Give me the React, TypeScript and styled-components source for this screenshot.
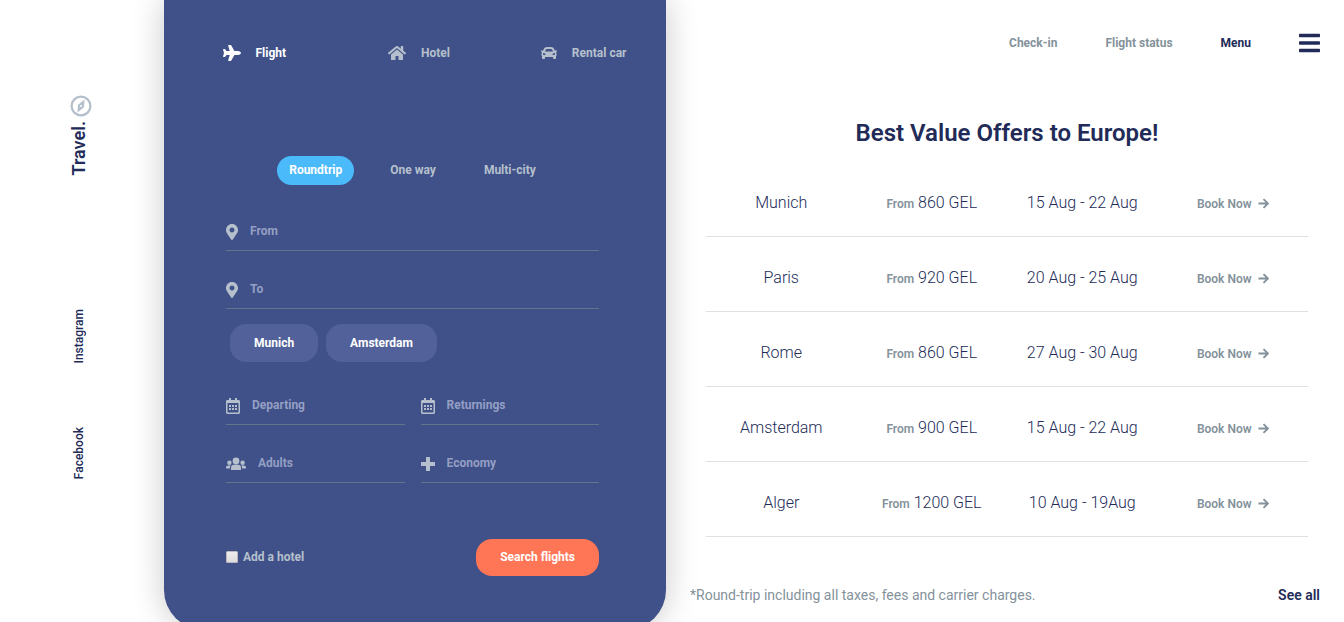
import React from 'react';
import styled, { createGlobalStyle } from 'styled-components';
import {
  FaPlane, FaHome, FaCar, FaMapMarkerAlt, FaRegCalendarAlt, FaBars,
} from 'react-icons/fa';

const GlobalStyle = createGlobalStyle`
  *, *::before, *::after { box-sizing: border-box; }
  body {
    margin: 0;
    overflow: hidden;
    background: #fff;
    color: #222b58;
    font: 700 12px/18px Roboto, "Liberation Sans", sans-serif;
  }
  button, input { font: inherit; }
  a { color: inherit; text-decoration: none; }
`;

const Page = styled.div`
  display: grid;
  grid-template-columns: 164px minmax(440px, 502fr) minmax(600px, 678fr);
  min-height: 100vh;
`;

const Sidebar = styled.aside`
  display: flex;
  flex-direction: column;
  align-items: flex-start;
  padding: 95px 0 0 67px;
`;

const Brand = styled.a`
  display: flex;
  flex-direction: column;
  align-items: flex-start;
  gap: 4px;
  height: 214px;
  svg { margin-left: 3px; color: #b4bfcc; }
`;

const Vertical = styled.span<{ $large?: boolean }>`
  writing-mode: vertical-rl;
  transform: rotate(180deg);
  font-size: ${p => (p.$large ? 18 : 12)}px;
  font-weight: ${p => (p.$large ? 600 : 500)};
  line-height: 24px;
`;

const Social = styled.nav`
  display: flex;
  flex-direction: column;
  align-items: flex-start;
  gap: 64px;
  a { display: flex; }
`;

const Panel = styled.main`
  height: 630px;
  padding: 43px 67px 0 62px;
  border-radius: 0 0 40px 40px;
  background: #405189;
  color: #b5c0cc;
  box-shadow: 0 0 32px rgba(0, 0, 0, 0.22);
`;

const Services = styled.nav`
  display: grid;
  grid-template-columns: repeat(3, 1fr);
  justify-items: center;
  margin: 0 -67px 0 -62px;
  padding-left: 8px;
`;

const Service = styled.button<{ $active?: boolean }>`
  display: flex;
  align-items: center;
  gap: 15px;
  padding: 0;
  border: 0;
  background: none;
  color: ${p => (p.$active ? '#fff' : '#b5c0cc')};
  line-height: 20px;
`;

const PlaneIcon = styled(FaPlane)`
  width: 18px;
  height: 16px;
`;

const HomeIcon = styled(FaHome)`
  width: 18px;
  height: 16px;
`;

const CarIcon = styled(FaCar)`
  width: 16px;
  height: 16px;
`;

const PinIcon = styled(FaMapMarkerAlt)`
  width: 12px;
  height: 16px;
`;

const CalendarIcon = styled(FaRegCalendarAlt)`
  width: 14px;
  height: 16px;
`;

const BarsIcon = styled(FaBars)`
  width: 21px;
  height: 24px;
`;

const Trips = styled.div`
  display: flex;
  justify-content: center;
  gap: 24px;
  margin: 93px 0 32px;
`;

const Trip = styled.button<{ $active?: boolean }>`
  padding: 5px 12px 6px;
  border: 0;
  border-radius: 15px;
  background: ${p => (p.$active ? '#4bbafa' : 'transparent')};
  color: ${p => (p.$active ? '#fff' : '#b5c0cc')};
`;

const Field = styled.label`
  display: flex;
  align-items: center;
  gap: 12px;
  height: 34px;
  padding-bottom: 6px;
  border-bottom: 1px solid #64748a;
  svg { flex: none; margin-top: 2px; }
`;

const TextInput = styled.input`
  flex: 1;
  min-width: 0;
  padding: 0;
  border: 0;
  outline: 0;
  background: none;
  color: #fff;
  &::placeholder { color: #949fc4; opacity: 1; }
`;

const Stack = styled.div`
  display: grid;
  gap: 24px;
`;

const Pair = styled.div`
  display: grid;
  grid-template-columns: repeat(2, minmax(0, 1fr));
  gap: 24px 16px;
`;

const Chips = styled.div`
  display: flex;
  gap: 8px;
  margin: 15px 4px 29px;
`;

const Pill = styled.button<{ $accent?: boolean }>`
  padding: ${p => (p.$accent ? '9px 24px 10px' : '10px 24px')};
  border: 0;
  border-radius: 16px;
  background: ${p => (p.$accent ? '#ff7657' : '#52619a')};
  color: #fff;
`;

const Actions = styled.div`
  display: flex;
  align-items: center;
  justify-content: space-between;
  margin-top: 56px;
`;

const Check = styled.label`
  display: flex;
  align-items: center;
  gap: 5px;
  padding-bottom: 2px;
`;

const Tick = styled.input`
  appearance: none;
  width: 12px;
  height: 12px;
  margin: 0;
  border: 1px solid #b9b9b9;
  border-radius: 1px;
  background: linear-gradient(#eee, #dcdcdc);
  &:checked { background: #4bbafa; }
`;

const Offers = styled.section`
  padding: 31px 24px 0;
`;

const TopNav = styled.nav`
  display: flex;
  align-items: center;
  justify-content: flex-end;
  gap: 48px;
  color: #84929b;
`;

const MenuButton = styled.button`
  display: flex;
  align-items: center;
  gap: 48px;
  padding: 0;
  border: 0;
  background: none;
  color: #222b58;
`;

const Title = styled.h1`
  margin: 62px 0 29px;
  padding-left: 4px;
  font-size: 24px;
  font-weight: 600;
  line-height: 32px;
  text-align: center;
`;

const Table = styled.table`
  width: calc(100% - 28px);
  margin-left: 16px;
  border-collapse: collapse;
  table-layout: fixed;
  font-size: 16px;
  font-weight: 300;
  line-height: 24px;
  text-align: center;
  td { height: 75px; padding: 8px 0 0; border-bottom: 1px solid #dce1e6; }
  tr:first-child td { height: 58px; padding: 0 0 8px; }
`;

const Muted = styled.span`
  color: #84929b;
  font-size: 12px;
  font-weight: 600;
  line-height: 12px;
`;

const Book = styled.a`
  color: #84929b;
  font-size: 12px;
  font-weight: 600;
  line-height: 12px;
  svg { margin-left: 3px; vertical-align: -1px; }
`;

const Footer = styled.footer`
  display: flex;
  justify-content: space-between;
  margin-top: 46px;
  font-size: 14px;
  font-weight: 400;
  line-height: 24px;
  color: #84929b;
  a { color: #222b58; font-weight: 600; }
`;

const offers = [
  ['Munich', '860', '15 Aug - 22 Aug'],
  ['Paris', '920', '20 Aug - 25 Aug'],
  ['Rome', '860', '27 Aug - 30 Aug'],
  ['Amsterdam', '900', '15 Aug - 22 Aug'],
  ['Alger', '1200', '10 Aug - 19Aug'],
];

const Compass = () => (
  <svg width="22" height="22" viewBox="0 0 22 22" fill="none" aria-hidden="true">
    <circle cx="11" cy="11" r="9.4" stroke="currentColor" strokeWidth="2.2" />
    <path
      fill="currentColor"
      fillRule="evenodd"
      d="M14.6 4.6 13.9 12.2 7.4 17.4 8.1 9.8ZM11 10a1 1 0 1 0 0 2 1 1 0 0 0 0-2Z"
    />
  </svg>
);

const People = () => (
  <svg width="20" height="16" viewBox="0 0 20 16" fill="currentColor" aria-hidden="true">
    <circle cx="10" cy="5" r="3.4" />
    <circle cx="3.4" cy="6.8" r="2.2" />
    <circle cx="16.6" cy="6.8" r="2.2" />
    <path d="M5 14v-2.2a3 3 0 0 1 3-3h4a3 3 0 0 1 3 3V14Z" />
    <path d="M0 12.6v-1a2.2 2.2 0 0 1 2.2-2.2h2.6a4 4 0 0 0-.9 3.2Z" />
    <path d="M20 12.6v-1a2.2 2.2 0 0 0-2.2-2.2h-2.6a4 4 0 0 1 .9 3.2Z" />
  </svg>
);

const Plus = () => (
  <svg width="14" height="16" viewBox="0 0 14 16" fill="currentColor" aria-hidden="true">
    <path d="M5.600 1h2.800a.6.6 0 0 1 .6.6V6h4.400a.6.6 0 0 1 .6.6v2.800a.6.6 0 0 1-.6.6H9v4.400a.6.6 0 0 1-.6.6H5.600a.6.6 0 0 1-.6-.6V10H.6a.6.6 0 0 1-.6-.6V6.600a.6.6 0 0 1 .6-.6H5V1.600a.6.6 0 0 1 .6-.6Z" />
  </svg>
);

const Arrow = () => (
  <svg width="11" height="11" viewBox="0 0 12 12" fill="none" stroke="currentColor" strokeWidth="2" aria-hidden="true">
    <path d="M.5 6h10M6 1.200 10.800 6 6 10.800" />
  </svg>
);

export default function App() {
  return (
    <>
      <GlobalStyle />
      <Page>
        <Sidebar>
          <Brand href="#home">
            <Compass />
            <Vertical $large>Travel.</Vertical>
          </Brand>
          <Social>
            <a href="#instagram"><Vertical>Instagram</Vertical></a>
            <a href="#facebook"><Vertical>Facebook</Vertical></a>
          </Social>
        </Sidebar>
        <Panel>
          <Services>
            <Service $active><PlaneIcon />Flight</Service>
            <Service><HomeIcon />Hotel</Service>
            <Service><CarIcon />Rental car</Service>
          </Services>
          <Trips>
            <Trip $active>Roundtrip</Trip>
            <Trip>One way</Trip>
            <Trip>Multi-city</Trip>
          </Trips>
          <Stack>
            <Field><PinIcon /><TextInput placeholder="From" aria-label="From" /></Field>
            <Field><PinIcon /><TextInput placeholder="To" aria-label="To" /></Field>
          </Stack>
          <Chips>
            <Pill>Munich</Pill>
            <Pill>Amsterdam</Pill>
          </Chips>
          <Pair>
            <Field><CalendarIcon /><TextInput placeholder="Departing" aria-label="Departing" /></Field>
            <Field><CalendarIcon /><TextInput placeholder="Returnings" aria-label="Returnings" /></Field>
            <Field><People /><TextInput placeholder="Adults" aria-label="Adults" /></Field>
            <Field><Plus /><TextInput placeholder="Economy" aria-label="Economy" /></Field>
          </Pair>
          <Actions>
            <Check><Tick type="checkbox" />Add a hotel</Check>
            <Pill $accent>Search flights</Pill>
          </Actions>
        </Panel>
        <Offers>
          <TopNav>
            <a href="#check-in">Check-in</a>
            <a href="#status">Flight status</a>
            <MenuButton>Menu<BarsIcon /></MenuButton>
          </TopNav>
          <Title>Best Value Offers to Europe!</Title>
          <Table>
            <tbody>
              {offers.map(([city, price, dates]) => (
                <tr key={city}>
                  <td>{city}</td>
                  <td><Muted>From</Muted> {price} GEL</td>
                  <td>{dates}</td>
                  <td><Book href="#book">Book Now <Arrow /></Book></td>
                </tr>
              ))}
            </tbody>
          </Table>
          <Footer>
            <span>*Round-trip including all taxes, fees and carrier charges.</span>
            <a href="#all">See all</a>
          </Footer>
        </Offers>
      </Page>
    </>
  );
}
